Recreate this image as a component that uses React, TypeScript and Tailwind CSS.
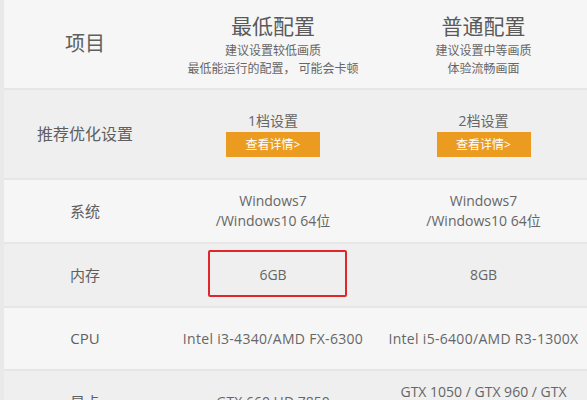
import React from "react";

const font = { fontFamily: '"Open Sans", "Noto Sans CJK SC", sans-serif' };

function Btn() {
  return (
    <div className="mt-[1px] flex h-[25px] w-[94px] items-center justify-center bg-[#ec9b21] text-[12px] leading-none text-white">
      查看详情&gt;
    </div>
  );
}

function Row({
  bg,
  h,
  label,
  labelSize,
  c2,
  c3,
  border = true,
}: {
  bg: string;
  h: string;
  label: React.ReactNode;
  labelSize: string;
  c2: React.ReactNode;
  c3: React.ReactNode;
  border?: boolean;
}) {
  return (
    <div className={`flex shrink-0 ${h} ${bg} ${border ? "border-b-2 border-[#e6e6e6]" : ""}`}>
      <div className={`flex w-[162px] shrink-0 items-center justify-center ${labelSize} text-[#5f5f5f]`}>
        {label}
      </div>
      <div className="relative flex w-[214px] shrink-0 flex-col items-center justify-center text-center text-[14px] leading-[20px] text-[#666]">
        {c2}
      </div>
      <div className="flex w-[207px] shrink-0 flex-col items-center justify-center text-center text-[14px] leading-[20px] text-[#666]">
        {c3}
      </div>
    </div>
  );
}

export default function App() {
  return (
    <div className="flex h-[400px] w-[587px] overflow-hidden bg-[#e9e9e9]" style={font}>
      <div className="w-[4px] shrink-0 bg-[#e9e9e9]" />
      <div className="flex w-[583px] flex-col">
        <Row
          bg="bg-[#f6f6f6]"
          h="h-[90px]"
          label="项目"
          labelSize="text-[20px]"
          c2={
            <>
              <div className="text-[21px] leading-[32px] text-[#5a5a5a]">最低配置</div>
              <div className="text-[12px] leading-[18px] text-[#666]">建议设置较低画质</div>
              <div className="text-[12px] leading-[18px] text-[#666]">最低能运行的配置，&nbsp;可能会卡顿</div>
            </>
          }
          c3={
            <>
              <div className="text-[21px] leading-[32px] text-[#5a5a5a]">普通配置</div>
              <div className="text-[12px] leading-[18px] text-[#666]">建议设置中等画质</div>
              <div className="text-[12px] leading-[18px] text-[#666]">体验流畅画面</div>
            </>
          }
        />
        <Row
          bg="bg-[#efefef]"
          h="h-[90px]"
          label="推荐优化设置"
          labelSize="text-[16px]"
          c2={
            <>
              <div>1档设置</div>
              <Btn />
            </>
          }
          c3={
            <>
              <div>2档设置</div>
              <Btn />
            </>
          }
        />
        <Row
          bg="bg-[#f6f6f6]"
          h="h-[64px]"
          label="系统"
          labelSize="text-[15px]"
          c2={
            <>
              <div>Windows7</div>
              <div>/Windows10 64位</div>
            </>
          }
          c3={
            <>
              <div>Windows7</div>
              <div>/Windows10 64位</div>
            </>
          }
        />
        <Row
          bg="bg-[#efefef]"
          h="h-[64px]"
          label="内存"
          labelSize="text-[15px]"
          c2={
            <>
              <div>6GB</div>
              <div className="absolute left-[42px] top-[6px] h-[47px] w-[139px] rounded-[2px] border-2 border-[#e0262a]" />
            </>
          }
          c3={<div>8GB</div>}
        />
        <Row
          bg="bg-[#f6f6f6]"
          h="h-[63px]"
          label="CPU"
          labelSize="text-[15px]"
          c2={<div className="whitespace-nowrap tracking-[0.3px]">Intel i3-4340/AMD FX-6300</div>}
          c3={<div className="whitespace-nowrap tracking-[0.3px]">Intel i5-6400/AMD R3-1300X</div>}
        />
        <Row
          bg="bg-[#efefef]"
          h="h-[62px]"
          border={false}
          label="显卡"
          labelSize="text-[15px]"
          c2={<div>GTX 660 HD 7850</div>}
          c3={
            <>
              <div>GTX 1050 / GTX 960 / GTX</div>
              <div>1650 / RX 470</div>
            </>
          }
        />
      </div>
    </div>
  );
}
